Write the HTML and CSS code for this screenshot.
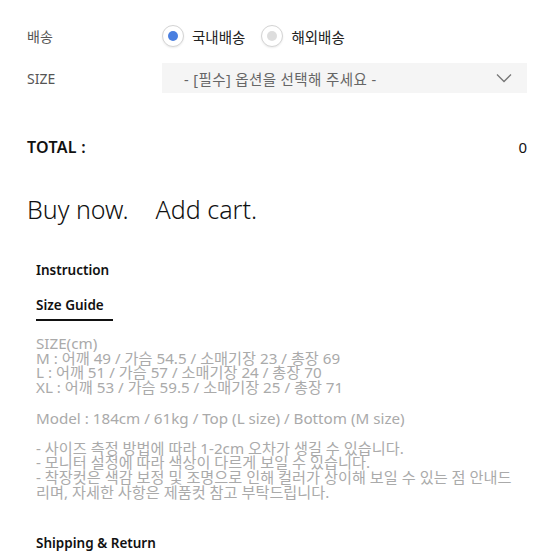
FILE: index.html
```html
<!DOCTYPE html>
<html lang="ko">
<head>
<meta charset="utf-8">
<link rel="stylesheet" href="styles.css">
</head>
<body>
<div class="page">
  <div class="opt-row ship-row">
    <div class="opt-label">배송</div>
    <div class="radios">
      <label class="radio"><span class="dot on"></span><span class="rtext">국내배송</span></label>
      <label class="radio"><span class="dot off"></span><span class="rtext">해외배송</span></label>
    </div>
  </div>
  <div class="opt-row size-row">
    <div class="opt-label">SIZE</div>
    <div class="select">
      <span class="select-text">- [필수] 옵션을 선택해 주세요 -</span>
      <svg class="chev" width="16" height="10" viewBox="0 0 16 10"><path d="M1 1.5 L8 8.5 L15 1.5" fill="none" stroke="#777" stroke-width="1.3"/></svg>
    </div>
  </div>
  <div class="total">
    <span class="total-label">TOTAL :</span>
    <span class="total-val">0</span>
  </div>
  <div class="buttons">
    <span class="btn">Buy now.</span>
    <span class="btn">Add cart.</span>
  </div>
  <div class="info">
    <div class="info-title">Instruction</div>
    <div class="tab">Size Guide</div>
    <div class="sizes">
      <div>SIZE(cm)</div>
      <div>M : 어깨 49 / 가슴 54.5 / 소매기장 23 / 총장 69</div>
      <div>L : 어깨 51 / 가슴 57 / 소매기장 24 / 총장 70</div>
      <div>XL : 어깨 53 / 가슴 59.5 / 소매기장 25 / 총장 71</div>
    </div>
    <div class="model">Model : 184cm / 61kg / Top (L size) / Bottom (M size)</div>
    <div class="notes">
      <div>- 사이즈 측정 방법에 따라 1-2cm 오차가 생길 수 있습니다.</div>
      <div>- 모니터 설정에 따라 색상이 다르게 보일 수 있습니다.</div>
      <div>- 착장컷은 색감 보정 및 조명으로 인해 컬러가 상이해 보일 수 있는 점 안내드리며, 자세한 사항은 제품컷 참고 부탁드립니다.</div>
    </div>
    <div class="info-title ship">Shipping &amp; Return</div>
  </div>
</div>
</body>
</html>
```
FILE: styles.css
```css
html, body { margin: 0; padding: 0; background: #fff; }
body { font-family: "Noto Sans", "Noto Sans CJK KR", sans-serif; color: #222; }
.page { padding: 18px 26px 0 27px; }
.opt-row { display: flex; align-items: center; }
.opt-label { width: 135px; font-size: 14px; color: #555; }
.ship-row { height: 36px; }
.radios { display: flex; gap: 16px; }
.radio { display: flex; align-items: center; gap: 8px; font-size: 14.5px; color: #222; }
.dot { width: 22px; height: 22px; border-radius: 50%; border: 1px solid #d4d4d4; box-sizing: border-box; display: flex; align-items: center; justify-content: center; background: #fff; box-shadow: 0 1px 2px rgba(0,0,0,0.08); }
.dot::after { content: ""; width: 10px; height: 10px; border-radius: 50%; }
.dot.on::after { background: #4a7fe0; }
.dot.off::after { background: #ddd; }
.size-row { margin-top: 9px; height: 30px; }
.select { flex: 1; height: 30px; background: #f5f5f5; display: flex; align-items: center; justify-content: space-between; padding: 0 15px 0 22px; box-sizing: border-box; }
.select-text { font-size: 14.5px; color: #666; letter-spacing: 0.4px; }
.chev { display: block; }
.total { display: flex; justify-content: space-between; align-items: center; margin-top: 40px; height: 28px; }
.total-label { font-size: 16px; font-weight: 600; color: #111; letter-spacing: 0.3px; }
.total-val { font-size: 15px; color: #111; }
.buttons { display: flex; gap: 27px; margin-top: 31px; }
.btn { font-size: 25px; color: #111; font-weight: 300; }
.info { padding-left: 9px; margin-top: 35px; }
.info-title { font-size: 13.5px; font-weight: 600; color: #111; }
.tab { display: inline-block; font-size: 13.5px; font-weight: 600; color: #111; margin-top: 17px; padding-bottom: 5px; border-bottom: 2px solid #111; width: 77px; }
.sizes { margin-top: 15px; font-size: 15.2px; line-height: 14.7px; color: #aaa; }
.model { margin-top: 15px; font-size: 15.2px; line-height: 16px; color: #aaa; }
.notes { margin-top: 15px; font-size: 15.2px; line-height: 14.6px; color: #aaa; max-width: 482px; }
.ship { margin-top: 35px; }
```
